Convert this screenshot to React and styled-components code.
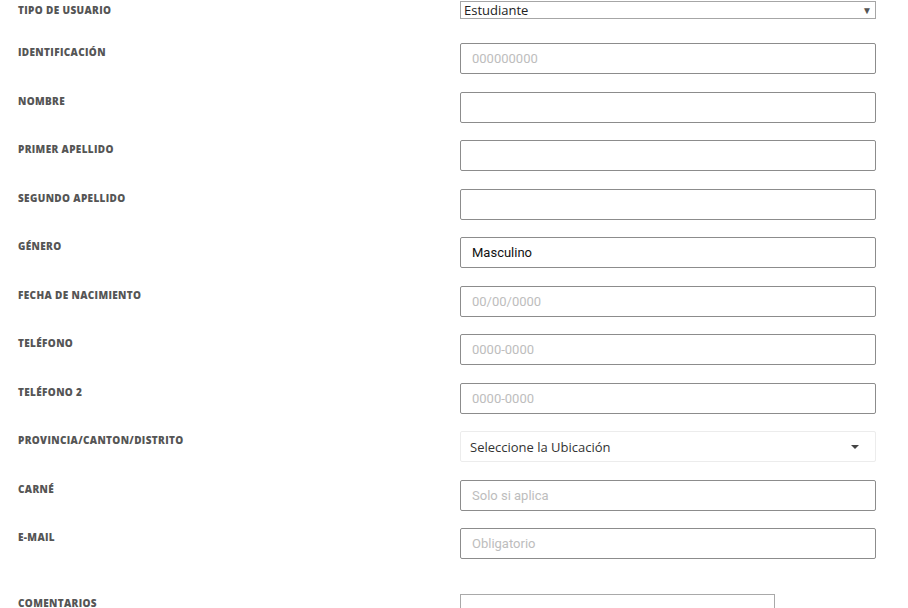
import styled, { createGlobalStyle } from "styled-components";

const GlobalStyle = createGlobalStyle`
  body {
    margin: 0;
    background: #fff;
    font-family: "Open Sans", "Liberation Sans", sans-serif;
  }
`;

const fields = [
  { label: "Identificación", placeholder: "000000000" },
  { label: "Nombre" },
  { label: "Primer Apellido" },
  { label: "Segundo Apellido" },
  { label: "Género", value: "Masculino" },
  { label: "Fecha de Nacimiento", placeholder: "00/00/0000" },
  { label: "Teléfono", placeholder: "0000-0000" },
  { label: "Teléfono 2", placeholder: "0000-0000" },
  { label: "Provincia/Canton/Distrito", location: true },
  { label: "Carné", placeholder: "Solo si aplica" },
  { label: "E-mail", placeholder: "Obligatorio" },
];

export default function App() {
  return (
    <Page>
      <GlobalStyle />
      <Form>
        <Row compact>
          <Label>Tipo de usuario</Label>
          <TypeSelect>
            <span>Estudiante</span>
            <SmallCaret>▼</SmallCaret>
          </TypeSelect>
        </Row>
        {fields.map((f) => (
          <Row key={f.label}>
            <Label>{f.label}</Label>
            {f.location ? (
              <LocationSelect>
                <span>Seleccione la Ubicación</span>
                <svg width="8" height="4" viewBox="0 0 8 4">
                  <path d="M0 0h8L4 4z" fill="#444" />
                </svg>
              </LocationSelect>
            ) : (
              <Input placeholder={f.placeholder} defaultValue={f.value} />
            )}
          </Row>
        ))}
        <Row extra>
          <Label>Comentarios</Label>
          <Comments />
        </Row>
      </Form>
    </Page>
  );
}

const Page = styled.div`
  width: 908px;
  height: 608px;
  overflow: hidden;
  padding-top: 1px;
  box-sizing: border-box;
`;

const Form = styled.div`
  display: flex;
  flex-direction: column;
  gap: 17.5px;
`;

const Row = styled.div`
  display: flex;
  align-items: flex-start;
  min-height: ${(props) => (props.compact ? "24.5px" : "31px")};
  margin-top: ${(props) => (props.extra ? "17.5px" : "0")};
`;

const Label = styled.div`
  width: 460px;
  flex-shrink: 0;
  padding-left: 18px;
  padding-top: 2px;
  box-sizing: border-box;
  font-family: "Open Sans", sans-serif;
  font-weight: 800;
  font-size: 10px;
  line-height: 14px;
  letter-spacing: 0.35px;
  text-transform: uppercase;
  color: #555;
`;

const TypeSelect = styled.div`
  width: 416px;
  height: 18px;
  box-sizing: border-box;
  border: 1px solid #a6a6a6;
  display: flex;
  align-items: center;
  justify-content: space-between;
  padding: 0 3px 0 3px;
  font-family: "Open Sans", sans-serif;
  font-size: 13px;
  color: #222;
`;

const SmallCaret = styled.span`
  font-size: 10px;
  color: #555;
`;

const Input = styled.input`
  width: 416px;
  height: 31px;
  box-sizing: border-box;
  border: 1px solid #8c8c8c;
  border-radius: 2px;
  padding: 0 11px;
  font-family: Roboto, "Liberation Sans", sans-serif;
  font-size: 13px;
  color: #111;
  outline: none;

  &::placeholder {
    color: #bdbdbd;
  }
`;

const LocationSelect = styled.div`
  width: 416px;
  height: 31px;
  box-sizing: border-box;
  border: 1px solid #ececec;
  border-radius: 2px;
  display: flex;
  align-items: center;
  justify-content: space-between;
  padding: 0 16px 0 9px;
  font-family: "Open Sans", sans-serif;
  font-size: 13px;
  color: #333;
`;

const Comments = styled.textarea`
  width: 315px;
  height: 60px;
  box-sizing: border-box;
  border: 1px solid #a9a9a9;
  resize: none;
  margin: 0;
`;
